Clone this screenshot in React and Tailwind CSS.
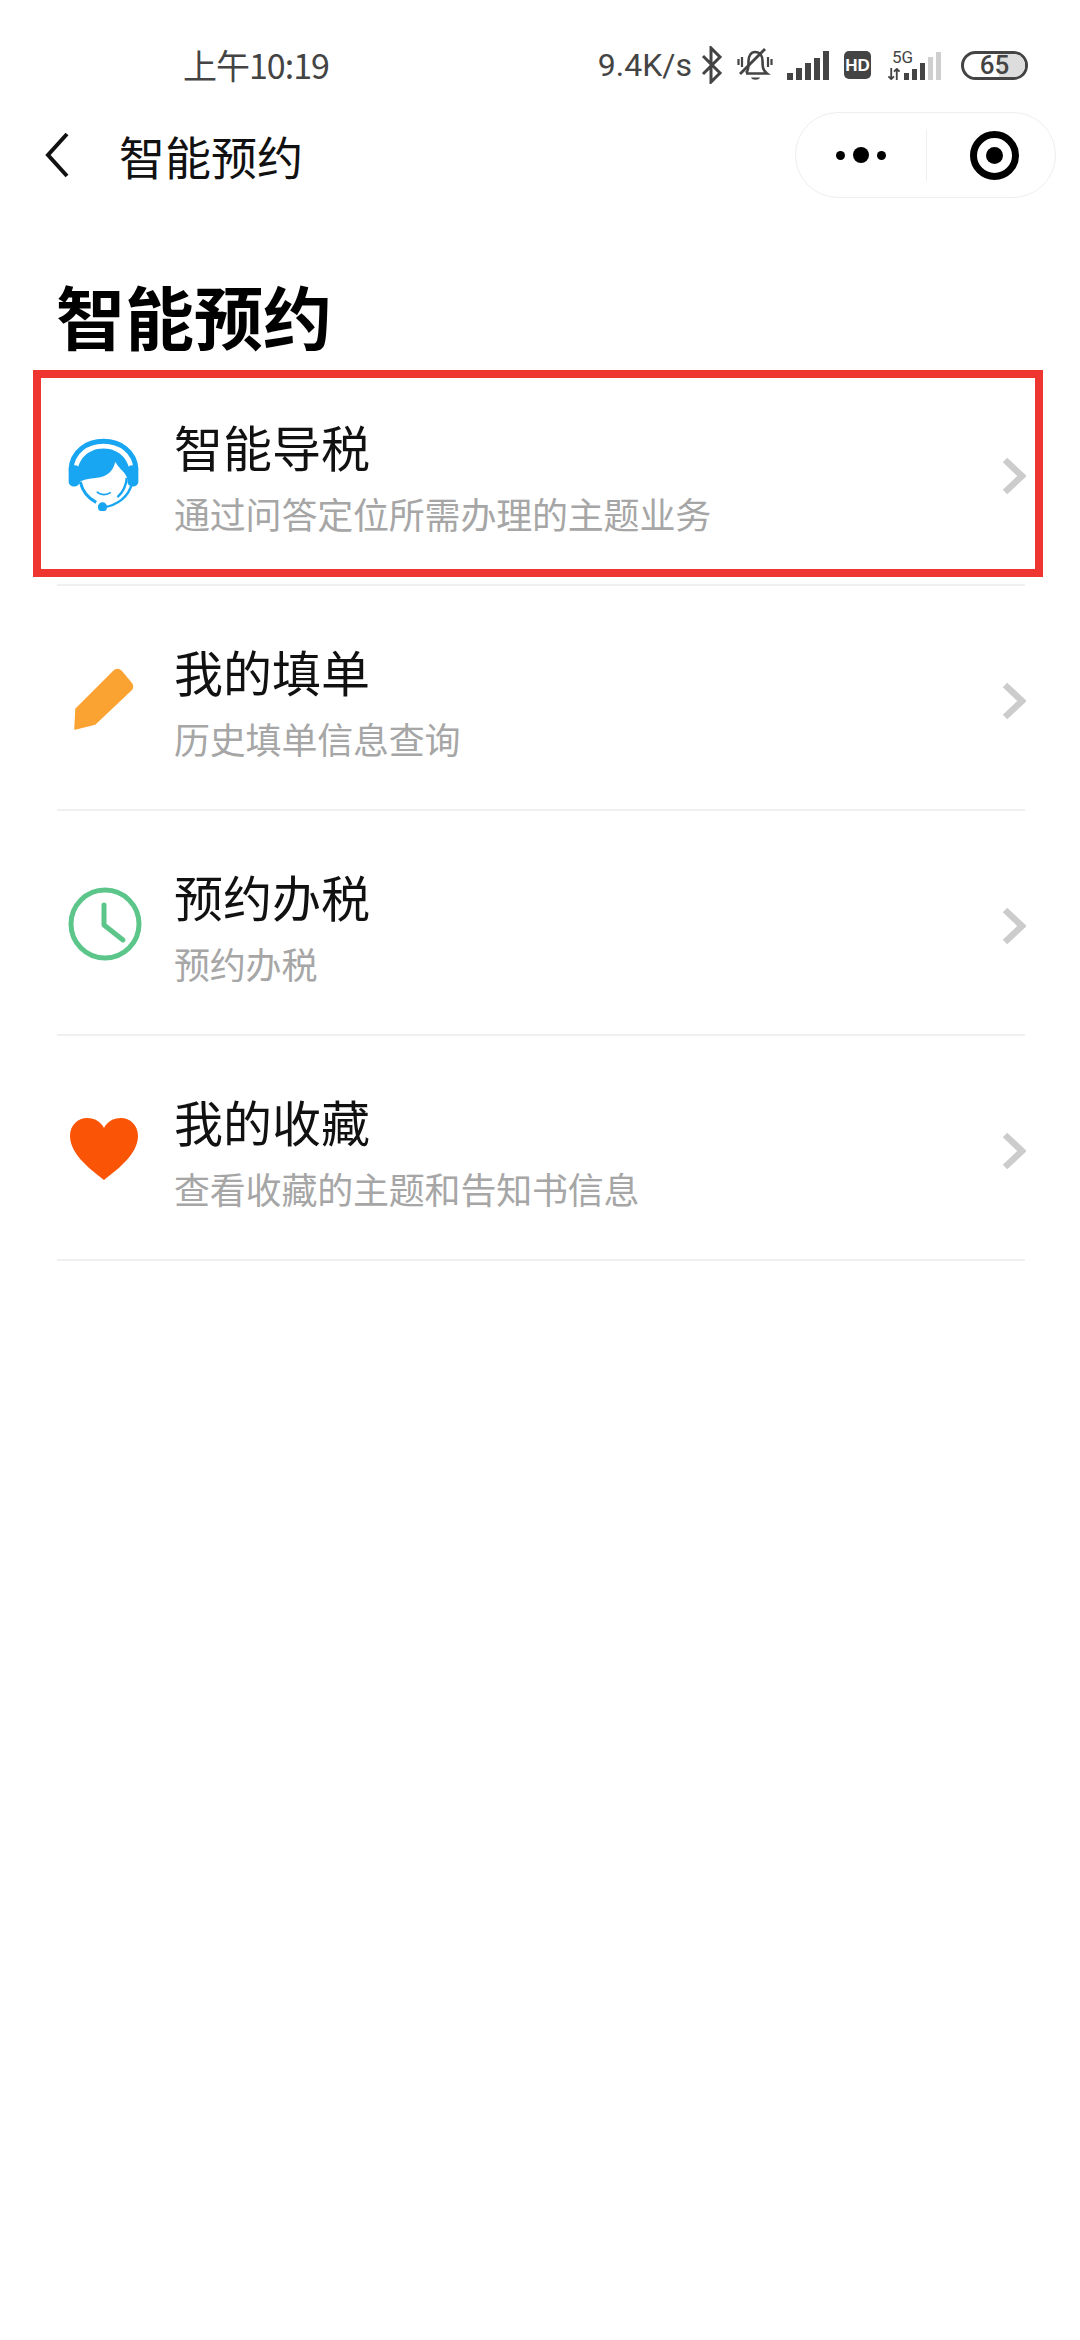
const cjk = { fontFamily: '"Noto Sans CJK SC", "Noto Sans", sans-serif' };

function Bluetooth() {
  return (
    <svg width="22" height="38" viewBox="0 0 22 38" fill="none" stroke="#444" strokeWidth="3" strokeLinejoin="miter">
      <path d="M2 10 L19 27 L10 36 V2 L19 11 L2 28" />
    </svg>
  );
}

function Bell() {
  return (
    <svg width="36" height="34" viewBox="0 0 36 34" fill="none" stroke="#444" strokeWidth="2.6">
      <path d="M9 25 C12 22 11.5 16 11.5 13 C11.5 8 14 4 18 4 C23 4 25.5 8 25.5 13 C25.5 18 25.5 22 30 25.5 L9 25.5" />
      <path d="M3 26 L28 1" strokeWidth="2.8" />
      <path d="M14 29.5 H23 C22 32.5 15 32.5 14 29.5 Z" fill="#444" stroke="none" />
      <path d="M5 9 V19 M1.5 11 V17 M31 9 V19 M34.5 11 V17" strokeWidth="2.2" />
    </svg>
  );
}

function Signal() {
  const heights = [7, 12, 17, 22, 29];
  return (
    <div className="flex items-end gap-[3px] h-[29px]">
      {heights.map((h, i) => (
        <div key={i} style={{ height: h }} className="w-[6px] bg-[#444444]" />
      ))}
    </div>
  );
}

function Signal5G() {
  const heights = [7, 11, 17, 23, 28];
  return (
    <div className="flex items-end gap-[3px]">
      {heights.map((h, i) => (
        <div key={i} style={{ height: h, background: i > 2 ? '#cfcfcf' : '#444444' }} className="w-[5px]" />
      ))}
    </div>
  );
}

function HeadsetIcon() {
  return (
    <svg width="73" height="73" viewBox="40 40 220 220" fill="none">
      <path d="M52 135 C55 80 100 50 150 50 C200 50 245 80 248 135" stroke="#18a6f2" strokeWidth="15" />
      <rect x="45" y="122" width="33" height="64" rx="14" fill="#18a6f2" />
      <rect x="222" y="122" width="33" height="64" rx="14" fill="#18a6f2" />
      <path d="M72 178 C60 112 100 72 150 72 C200 72 240 112 228 178 C222 156 212 142 202 134 C195 126 190 118 185 112 C180 140 160 156 130 160 C105 164 85 164 72 178 Z" fill="#18a6f2" />
      <path d="M80 172 C86 198 102 220 128 234" stroke="#18a6f2" strokeWidth="9" />
      <path d="M220 160 C218 186 206 206 192 218" stroke="#18a6f2" strokeWidth="7" />
      <path d="M236 176 C226 218 192 242 150 249" stroke="#18a6f2" strokeWidth="7" />
      <path d="M130 202 C140 213 160 213 172 204" stroke="#18a6f2" strokeWidth="5" />
      <circle cx="147" cy="248" r="14" fill="#18a6f2" />
    </svg>
  );
}

function PencilIcon() {
  return (
    <svg width="62" height="65" viewBox="20 15 62 65">
      <path d="M24 57 L62 19 C64 17 67 17 69 19 L79 31 C81 33 81 36 79 38 L43 72 L23 77 Z" fill="#fba332" stroke="#fba332" strokeWidth="1.5" strokeLinejoin="round" />
    </svg>
  );
}

function ClockIcon() {
  return (
    <svg width="76" height="76" viewBox="0 0 76 76" fill="none" stroke="#5cc68a" className="ml-[3px]">
      <circle cx="38" cy="38" r="34" strokeWidth="5" />
      <path d="M37 19 V39 L56 54" strokeWidth="5" strokeLinecap="round" strokeLinejoin="round" />
    </svg>
  );
}

function HeartIcon() {
  return (
    <svg width="70" height="64" viewBox="0 0 70 64" className="ml-[1px]">
      <path d="M35 63 C24 54 1 38 1 19 C1 8 9 1 18 1 C26 1 32 5 35 11 C38 5 44 1 52 1 C61 1 69 8 69 19 C69 38 46 54 35 63 Z" fill="#fa5507" />
    </svg>
  );
}

function Chevron() {
  return (
    <svg width="24" height="38" viewBox="0 0 24 38" fill="none" stroke="#cccccc" strokeWidth="6.5">
      <path d="M3 3 L20 19 L3 35" />
    </svg>
  );
}

const rows = [
  { icon: <HeadsetIcon />, title: '智能导税', sub: '通过问答定位所需办理的主题业务' },
  { icon: <PencilIcon />, title: '我的填单', sub: '历史填单信息查询' },
  { icon: <ClockIcon />, title: '预约办税', sub: '预约办税' },
  { icon: <HeartIcon />, title: '我的收藏', sub: '查看收藏的主题和告知书信息' },
];

export default function App() {
  return (
    <div className="relative w-[1080px] h-[2340px] bg-white overflow-hidden" style={cjk}>
      {/* status bar */}
      <div className="flex items-center h-[50px] mt-[40px] pl-[183px] pr-[52px] text-[#444444]">
        <span className="text-[34px] leading-none tracking-[-1px]">上午10:19</span>
        <span className="ml-auto text-[32px] leading-none" style={{ fontFamily: 'Roboto, sans-serif' }}>9.4K/s</span>
        <div className="ml-[9px] flex items-center"><Bluetooth /></div>
        <div className="ml-[14px] flex items-center"><Bell /></div>
        <div className="ml-[14px]"><Signal /></div>
        <div className="ml-[15px] w-[27px] h-[28px] rounded-[5px] bg-[#444444] text-white flex items-center justify-center text-[17px] font-bold leading-none" style={{ fontFamily: '"Liberation Sans", sans-serif' }}>HD</div>
        <div className="ml-[17px] relative w-[57px] h-[29px] flex items-end">
          <span className="absolute left-[4px] -top-[2px] text-[17px] leading-none" style={{ fontFamily: 'Roboto, sans-serif' }}>5G</span>
          <svg width="12" height="12" viewBox="0 0 12 13" stroke="#444" strokeWidth="2" fill="none">
            <path d="M3 0 V12 M0 9 L3 12 L6 9 M9 13 V1 M6 4 L9 1 L12 4" />
          </svg>
          <div className="ml-[4px]"><Signal5G /></div>
        </div>
        <div className="ml-[16px] w-[67px] h-[29px] rounded-full border-[3px] border-[#444444] relative flex items-center justify-center overflow-hidden">
          <div className="absolute right-0 top-0 bottom-0 w-[26px] bg-[#dddddd]" />
          <span className="relative text-[26px] font-medium leading-none" style={{ fontFamily: 'Roboto, sans-serif' }}>65</span>
        </div>
      </div>

      {/* nav bar */}
      <div className="flex items-center h-[130px] pl-[45px] pr-[24px]">
        <svg width="24" height="46" viewBox="0 0 24 46" fill="none" stroke="#111" strokeWidth="4">
          <path d="M22 2 L3 23 L22 44" />
        </svg>
        <span className="ml-[50px] text-[46px] leading-none text-[#111111]">智能预约</span>
        <div className="ml-auto w-[261px] h-[86px] rounded-full border border-[#eeeeee] flex items-center">
          <div className="w-[130px] flex items-center justify-center gap-[8px]">
            <div className="w-[9px] h-[9px] rounded-full bg-black" />
            <div className="w-[16px] h-[16px] rounded-full bg-black" />
            <div className="w-[9px] h-[9px] rounded-full bg-black" />
          </div>
          <div className="w-px h-[52px] bg-[#eeeeee]" />
          <div className="flex-1 flex items-center justify-center pl-[6px]">
            <div className="w-[49px] h-[49px] rounded-full border-[7px] border-black flex items-center justify-center">
              <div className="w-[17px] h-[17px] rounded-full bg-black" />
            </div>
          </div>
        </div>
      </div>

      {/* heading */}
      <div className="h-[141px] pl-[56px] pt-[60px]">
        <h1 className="text-[69px] leading-[70px] font-bold text-black">智能预约</h1>
      </div>

      {/* list */}
      <div className="ml-[57px] mr-[55px]">
        {rows.map((r) => (
          <div key={r.title} className="flex items-center h-[225px] border-b-2 border-[#f0f0f0]">
            <div className="w-[118px] -ml-[13px] flex justify-center shrink-0 mt-[3px]">{r.icon}</div>
            <div className="ml-[12px] mt-[5px] flex flex-col">
              <span className="text-[49px] leading-[60px] text-[#111111]">{r.title}</span>
              <span className="mt-[15px] text-[36px] leading-[44px] tracking-[-0.2px] text-[#a6a6a6]">{r.sub}</span>
            </div>
            <div className="ml-auto -mr-[1px] mt-[6px]"><Chevron /></div>
          </div>
        ))}
      </div>

      {/* red annotation box */}
      <div className="absolute left-[33px] top-[370px] w-[1010px] h-[207px] border-[8px] border-[#ee3530]" />
    </div>
  );
}
